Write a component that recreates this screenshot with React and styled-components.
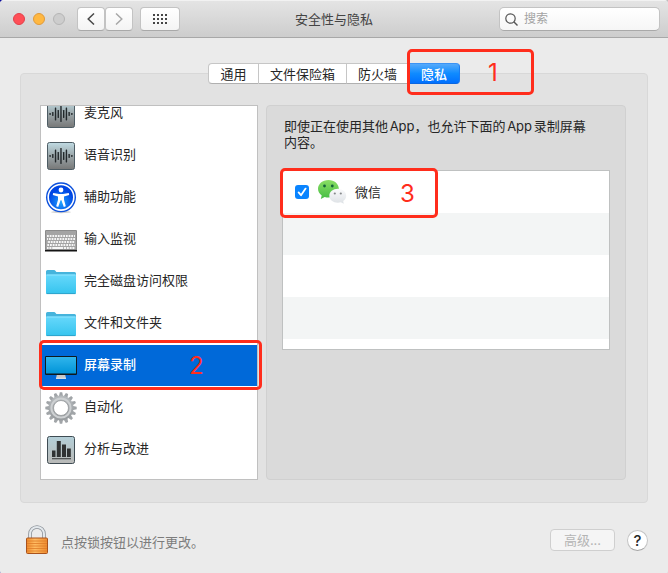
import React, { useState } from 'react'
import styled, { createGlobalStyle, css } from 'styled-components'

const GlobalStyle = createGlobalStyle`
  * {
    box-sizing: border-box;
  }

  body {
    margin: 0;
    background: linear-gradient(to right, #0a0a9c 4px, #bdbdbd 8px);
    font-family: Inter, "Noto Sans CJK SC", sans-serif;
    font-size: 13px;
    line-height: 16px;
    color: #262626;
  }

  button, input {
    margin: 0;
    font: inherit;
    color: inherit;
  }
`

const Window = styled.div`
  display: flex;
  flex-direction: column;
  min-height: 100vh;
  border-radius: 4px;
  background: #ebebeb;
  overflow: hidden;
`

const TitleBar = styled.header`
  display: grid;
  grid-template-columns: 1fr auto 1fr;
  align-items: center;
  height: 38px;
  padding: 0 8px;
  border-top: 1px solid #f2f2f2;
  border-bottom: 1px solid #a8a8a8;
  background: linear-gradient(#e4e4e4, #cdcdcd);
`

const Title = styled.h1`
  margin: 0;
  font-size: 13px;
  font-weight: 400;
  color: #444;
`

const Controls = styled.div`
  display: flex;
  align-items: center;
  padding-left: 5px;
`

const Lights = styled.div`
  display: flex;
  gap: 8px;
  margin-right: 12px;
`

const Light = styled.button`
  width: 12px;
  height: 12px;
  padding: 0;
  border: 1px solid ${props => props.$edge};
  border-radius: 50%;
  background: ${props => props.$fill};
`

const ToolButton = styled.button`
  display: flex;
  align-items: center;
  justify-content: center;
  width: ${props => (props.$wide ? 40 : 28)}px;
  height: 24px;
  margin-left: ${props => (props.$wide ? 7 : 0)}px;
  padding: 0;
  border: 1px solid #c3c3c3;
  border-bottom-color: #a9a9a9;
  border-radius: 4px;
  background: linear-gradient(#fff, #f4f4f4);
`

const Search = styled.label`
  display: flex;
  align-items: center;
  justify-self: end;
  gap: 6px;
  width: 161px;
  max-width: 100%;
  height: 24px;
  padding: 0 5px;
  border: 1px solid #c3c3c3;
  border-bottom-color: #a9a9a9;
  border-radius: 5px;
  background: linear-gradient(#fff, #f6f6f6);

  input {
    flex: 1;
    min-width: 0;
    padding: 0;
    border: 0;
    outline: none;
    background: none;
    font-size: 12px;
  }

  input::placeholder {
    color: #a3a3a3;
  }
`

const Content = styled.main`
  display: flex;
  flex-direction: column;
  padding: 25px 20px 20px;
`

const Tabs = styled.div`
  display: flex;
  align-self: center;
  position: relative;
  z-index: 1;
  margin-bottom: -11px;
`

const Tab = styled.button`
  position: relative;
  min-width: 51px;
  height: 21px;
  padding: 0 11px;
  border: solid #c6c6c6;
  border-width: 1px 1px 1px 0;
  border-bottom-color: #b0b0b0;
  background: #fff;
  line-height: 16px;

  &:first-child {
    border-left-width: 1px;
    border-radius: 4px 0 0 4px;
  }

  &:last-child {
    border-radius: 0 4px 4px 0;
  }

  ${props => props.$active && css`
    border-color: #3b93f5 #1a7cf2 #0a66e0;
    background: linear-gradient(#55aafb, #0f8bff 50%, #0070ff);
    color: #fff;
    font-weight: 500;
  `}
`

const Group = styled.section`
  display: flex;
  gap: 8px;
  padding: 31px 21px 22px 19px;
  border: 1px solid #d8d8d8;
  border-radius: 4px;
  background: #e2e2e2;
`

const SidebarFrame = styled.nav`
  position: relative;
  flex: 0 0 218px;
  border: 1px solid #c0c0c0;
  background: #fff;
`

const Scroller = styled.div`
  overflow: hidden;
  padding-bottom: 8px;

  /* scrolled a little, so the first row is cut */
  ul {
    margin: -13px 0 0;
    padding: 0;
    list-style: none;
  }
`

const Item = styled.button`
  display: flex;
  align-items: center;
  gap: 7px;
  width: 100%;
  height: 42px;
  padding: 0 4px;
  border: 0;
  border-bottom: 1px solid #fff;
  background: ${props => (props.$active ? '#0069d9' : '#fff')};
  color: ${props => (props.$active ? '#fff' : 'inherit')};
  font-weight: ${props => (props.$active ? 500 : 400)};
  text-align: left;

  span {
    padding-bottom: 4px;
  }
`

const Panel = styled.div`
  flex: 1;
  min-width: 0;
  padding: 12px 15px;
  border: 1px solid #d0d0d0;
  border-radius: 4px;
  background: #dadada;
`

const Description = styled.p`
  margin: 0 0 20px;
  padding: 0 12px 0 2px;
  text-autospace: normal;
`

const AppList = styled.div`
  position: relative;
  border: 1px solid #bfc1c1;
  background: #fff;
`

const AppRow = styled.div`
  display: flex;
  align-items: center;
  height: ${props => (props.$last ? 10 : 42)}px;
  padding: 0 12px;
  background: ${props => (props.$striped ? '#f3f5f5' : '#fff')};

  label {
    display: flex;
    align-items: center;
    gap: 8px;
  }
`

const checkMark = encodeURIComponent(
  '<svg xmlns="http://www.w3.org/2000/svg" viewBox="0 0 14 14"><path d="M3.6 7.4 6 10.2 10.6 3.6" fill="none" stroke="#fff" stroke-width="1.8" stroke-linecap="round" stroke-linejoin="round"/></svg>'
)

const Checkbox = styled.input`
  appearance: none;
  width: 14px;
  height: 14px;
  border: 1px solid #b5b5b5;
  border-radius: 3px;
  background: #fff;

  &:checked {
    border: 0;
    background: url("data:image/svg+xml;charset=UTF-8,${checkMark}") #0a84ff;
  }
`

const Mark = styled.span`
  position: absolute;
  z-index: 2;
  top: ${props => props.$top}px;
  left: ${props => props.$left}px;
  width: ${props => props.$width}px;
  height: ${props => props.$height}px;
  padding-left: ${props => props.$indent}px;
  border: 3px solid #ff2d1c;
  border-radius: 5px;
  color: #ff2d1c;
  font-size: 24px;
  font-weight: 400;
  line-height: ${props => props.$height - 5}px;
  text-align: left;
  pointer-events: none;
`

const Footer = styled.footer`
  display: flex;
  align-items: center;
  gap: 12px;
  padding: 22px 0 0 5px;
`

const LockText = styled.span`
  flex: 1;
  padding-top: 4px;
  color: #7c7c7c;
`

const Advanced = styled.button`
  width: 65px;
  height: 22px;
  padding: 0;
  border: 1px solid #cfcfcf;
  border-radius: 4px;
  background: #f5f5f5;
  color: #b4b4b4;
`

const Help = styled.button`
  width: 21px;
  height: 21px;
  padding: 0;
  border: 1px solid #c4c4c4;
  border-bottom-color: #a5a5a5;
  border-radius: 50%;
  background: #fff;
  font-size: 15px;
  font-weight: 500;
  line-height: 19px;
`

const Icon = ({ children }) => (
  <svg width="32" height="32" viewBox="0 0 32 32" aria-hidden="true">{children}</svg>
)

const HiddenSvg = styled.svg`
  position: absolute;
`

const Defs = () => (
  <HiddenSvg width="0" height="0" aria-hidden="true">
    <defs>
      <linearGradient id="steel" x2="0" y2="1">
        <stop offset="0" stopColor="#c0dbe3" />
        <stop offset="0.5" stopColor="#9aa5a8" />
        <stop offset="1" stopColor="#777" />
      </linearGradient>
      <linearGradient id="chart" x2="0" y2="1">
        <stop offset="0" stopColor="#b4cfd8" />
        <stop offset="1" stopColor="#b9b9b7" />
      </linearGradient>
      <radialGradient id="blue" cy="0.7">
        <stop offset="0" stopColor="#1fa4ff" />
        <stop offset="1" stopColor="#0046e4" />
      </radialGradient>
      <linearGradient id="folder" x2="0" y2="1">
        <stop offset="0" stopColor="#67d8fb" />
        <stop offset="1" stopColor="#35c4ee" />
      </linearGradient>
      <linearGradient id="screen" x2="0" y2="1">
        <stop offset="0" stopColor="#30b5ec" />
        <stop offset="1" stopColor="#0094d8" />
      </linearGradient>
      <linearGradient id="gear" x2="0" y2="1">
        <stop offset="0" stopColor="#b4b8bb" />
        <stop offset="1" stopColor="#999da0" />
      </linearGradient>
      <linearGradient id="green" x2="0" y2="1">
        <stop offset="0" stopColor="#8ade64" />
        <stop offset="1" stopColor="#45bd45" />
      </linearGradient>
      <linearGradient id="pale" x2="0" y2="1">
        <stop offset="0" stopColor="#fbfbfc" />
        <stop offset="1" stopColor="#dde1e5" />
      </linearGradient>
      <linearGradient id="brass" x2="1" y2="0">
        <stop offset="0" stopColor="#f08a2c" />
        <stop offset="0.4" stopColor="#ffbc62" />
        <stop offset="1" stopColor="#ee8a2e" />
      </linearGradient>
    </defs>
  </HiddenSvg>
)

const WAVE = [2, 4, 13, 8, 16, 8, 13, 4, 2]

const WaveIcon = () => (
  <Icon>
    <rect x="2.5" y="2.5" width="27" height="27" rx="2" fill="url(#steel)" stroke="#4d5c64" />
    {WAVE.map((h, i) => (
      <rect key={i} x={4.4 + i * 2.72} y={16 - h / 2} width="1.4" height={h} rx="0.4" fill="#22282b" />
    ))}
  </Icon>
)

const AccessIcon = () => (
  <Icon>
    <ellipse cx="16" cy="30" rx="10" ry="1.2" fill="#d0d0d0" />
    <circle cx="16" cy="15.3" r="15" fill="#0b50dc" />
    <circle cx="16" cy="15.3" r="12.8" fill="url(#blue)" stroke="#fff" strokeWidth="1.6" />
    <circle cx="16" cy="8" r="2.4" fill="#fff" />
    <path d="M8.2 11 14 12.100h4l5.800-1.100.4 1.900-5.200 1.500v3.300l1.800 6.500-2 .7-2.400-6.600h-.8l-2.400 6.600-2-.7 1.800-6.500v-3.300L7.800 12.900Z" fill="#fff" />
  </Icon>
)

const KeyboardIcon = () => (
  <Icon>
    <rect x="0" y="6" width="32" height="21" rx="1" fill="#8b8b8b" />
    <rect x="1" y="7" width="30" height="18" fill="#a4a4a4" />
    <rect x="0" y="26" width="32" height="1.5" fill="#151515" />
    {[0, 1, 2, 3, 4].map(row => (
      <path
        key={row}
        d={`M2 ${12 + row * 3}H30`}
        stroke="#f6f6f6"
        strokeWidth="2"
        strokeDasharray={row === 4 ? '2 .8 2 .8 2 .8 11 .8 2 .8' : '1.8 .9'}
        strokeDashoffset={row * 0.8}
      />
    ))}
  </Icon>
)

const FolderIcon = () => (
  <Icon>
    <path d="M1 27V5.500Q1 4 2.500 4H9q1 0 1.600 1l.8 1H29.500Q31 6 31 7.500V27Z" fill="#46b4dc" />
    <path d="M1 9.500Q1 8.500 2 8.500H30q1 0 1 1V26.500Q31 28 29.500 28h-27Q1 28 1 26.500Z" fill="url(#folder)" />
    <path d="M1.500 9H30.500" stroke="#8fe5ff" />
    <path d="M1.500 27.600H30.500" stroke="#2ea3cb" />
  </Icon>
)

const ScreenIcon = () => (
  <Icon>
    <path d="M12 24h8l1 4.500H11Z" fill="#c9c9c9" />
    <path d="M11 28.300h10" stroke="#efefef" />
    <rect x="0" y="6" width="32" height="19" rx="1.2" fill="#10181d" />
    <rect x="1" y="7" width="30" height="16.500" fill="url(#screen)" />
  </Icon>
)

const TEETH = Array.from({ length: 16 }, (_, i) => i * 22.5)

const GearIcon = () => (
  <Icon>
    {TEETH.map(angle => (
      <path key={angle} d="M13.8 5 14.800 .3h2.400l1 4.700Z" fill="#a1a5a8" transform={`rotate(${angle} 16 16)`} />
    ))}
    <circle cx="16" cy="16" r="10" fill="#fff" stroke="url(#gear)" strokeWidth="5" />
    <circle cx="16" cy="16" r="9.600" fill="none" stroke="#cdd0d2" strokeWidth="2" />
    <circle cx="16" cy="16" r="7.500" fill="none" stroke="#94989b" strokeWidth="0.800" />
  </Icon>
)

const ChartIcon = () => (
  <Icon>
    <rect x="2.5" y="2.5" width="27" height="27" rx="2" fill="url(#chart)" stroke="#3f4c53" />
    <path d="M7 16.500h3.500V23H7ZM11.800 7h4v16h-4ZM17 10.500h4V23h-4ZM22 14.500h3.800V23H22ZM7 24.200h19v1H7Z" fill="#303233" />
  </Icon>
)

const WeChatIcon = () => (
  <svg width="30" height="28" viewBox="0 0 30 28" aria-hidden="true">
    <path d="M11.500 2C5.500 2 1 6 1 10.800c0 2.800 1.400 5 3.700 6.600L3.800 21l3.900-2c1.200.4 2.500.5 3.800.5 6 0 10.300-3.900 10.300-8.700S17.500 2 11.500 2Z" fill="url(#green)" />
    <circle cx="7.500" cy="8" r="1.4" fill="#15633a" />
    <circle cx="15.300" cy="8" r="1.4" fill="#15633a" />
    <path d="M20.800 10.800c-4.700 0-8.500 3.100-8.500 7s3.800 7 8.500 7c1.100 0 2.100-.2 3-.5l3 1.400-.6-2.700c1.900-1.300 3-3.100 3-5.200 0-3.900-3.700-7-8.400-7Z" fill="url(#pale)" />
    <circle cx="17.800" cy="15.500" r="1.1" fill="#87898c" />
    <circle cx="23.800" cy="15.500" r="1.1" fill="#87898c" />
  </svg>
)

const LockIcon = () => (
  <svg width="24" height="30" viewBox="0 0 24 30" aria-hidden="true">
    <path d="M5 14V9a7 7 0 0 1 14 0v5" fill="none" stroke="#8c9299" strokeWidth="3.600" />
    <path d="M5 14V9a7 7 0 0 1 14 0v5" fill="none" stroke="#e3e8ec" strokeWidth="2" />
    <rect x="1.5" y="13" width="21" height="15.500" rx="1" fill="url(#brass)" stroke="#a9521c" />
    <path d="M2 16h20M2 18.500h20M2 21h20M2 23.500h20M2 26h20" stroke="#dd7b28" strokeWidth="0.800" />
  </svg>
)

const TABS = ['通用', '文件保险箱', '防火墙', '隐私']

const ITEMS = [
  { name: '麦克风', Glyph: WaveIcon },
  { name: '语音识别', Glyph: WaveIcon },
  { name: '辅助功能', Glyph: AccessIcon },
  { name: '输入监视', Glyph: KeyboardIcon },
  { name: '完全磁盘访问权限', Glyph: FolderIcon },
  { name: '文件和文件夹', Glyph: FolderIcon },
  { name: '屏幕录制', Glyph: ScreenIcon },
  { name: '自动化', Glyph: GearIcon },
  { name: '分析与改进', Glyph: ChartIcon }
]

const App = () => {
  const [tab, setTab] = useState('隐私')
  const [item, setItem] = useState('屏幕录制')
  const [allowed, setAllowed] = useState(true)

  return (
    <Window>
      <GlobalStyle />
      <Defs />
      <TitleBar>
        <Controls>
          <Lights>
            <Light aria-label="关闭" $fill="#ff4f57" $edge="#e2404a" />
            <Light aria-label="最小化" $fill="#ffb841" $edge="#e09a3a" />
            <Light aria-label="缩放" $fill="#cdcdcd" $edge="#b5b5b5" />
          </Lights>
          <ToolButton aria-label="后退">
            <svg width="8" height="12" viewBox="0 0 8 12"><path d="M7 .5 1.2 6 7 11.500" fill="none" stroke="#4a4a4a" strokeWidth="1.5" /></svg>
          </ToolButton>
          <ToolButton aria-label="前进">
            <svg width="8" height="12" viewBox="0 0 8 12"><path d="M1 .5 6.800 6 1 11.500" fill="none" stroke="#a8a8a8" strokeWidth="1.5" /></svg>
          </ToolButton>
          <ToolButton $wide aria-label="显示全部">
            <svg width="14" height="10" viewBox="0 0 14 10">
              <path d="M0 1h14M0 5h14M0 9h14" stroke="#454545" strokeWidth="2" strokeDasharray="2 2" />
            </svg>
          </ToolButton>
        </Controls>
        <Title>安全性与隐私</Title>
        <Search>
          <svg width="13" height="13" viewBox="0 0 13 13">
            <circle cx="5.500" cy="5.500" r="4.700" fill="none" stroke="#555" strokeWidth="1.2" />
            <path d="m9 9 3.500 3.500" stroke="#555" strokeWidth="1.4" />
          </svg>
          <input type="text" placeholder="搜索" aria-label="搜索" />
        </Search>
      </TitleBar>

      <Content>
        <Tabs role="tablist">
          {TABS.map(name => (
            <Tab key={name} role="tab" aria-selected={tab === name} $active={tab === name} onClick={() => setTab(name)}>
              {name}
              {name === '隐私' && <Mark $top={-15} $left={-2} $width={127} $height={46} $indent={78}>1</Mark>}
            </Tab>
          ))}
        </Tabs>

        <Group>
          <SidebarFrame>
            <Scroller>
              <ul>
                {ITEMS.map(({ name, Glyph }) => (
                  <li key={name}>
                    <Item $active={item === name} onClick={() => setItem(name)}>
                      <Glyph />
                      <span>{name}</span>
                    </Item>
                  </li>
                ))}
              </ul>
            </Scroller>
            <Mark $top={234} $left={-2} $width={223} $height={50} $indent={147}>2</Mark>
          </SidebarFrame>

          <Panel>
            <Description>即使正在使用其他App，也允许下面的App录制屏幕内容。</Description>
            <AppList>
              <AppRow>
                <label>
                  <Checkbox type="checkbox" checked={allowed} onChange={e => setAllowed(e.target.checked)} />
                  <WeChatIcon />
                  <span>微信</span>
                </label>
              </AppRow>
              <AppRow $striped />
              <AppRow />
              <AppRow $striped />
              <AppRow $last />
              <Mark $top={-3} $left={-3} $width={158} $height={50} $indent={117}>3</Mark>
            </AppList>
          </Panel>
        </Group>

        <Footer>
          <LockIcon />
          <LockText>点按锁按钮以进行更改。</LockText>
          <Advanced disabled>高级...</Advanced>
          <Help aria-label="帮助">?</Help>
        </Footer>
      </Content>
    </Window>
  )
}

export default App
